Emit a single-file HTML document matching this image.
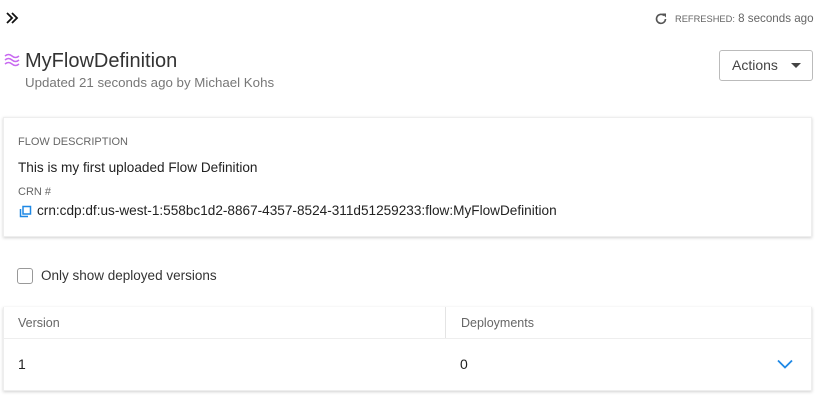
<!DOCTYPE html>
<html><head><style>
*{margin:0;padding:0;box-sizing:border-box}
body{width:823px;height:401px;background:#fff;font-family:"Liberation Sans",Arial,sans-serif;color:#2b2b2b;position:relative;overflow:hidden}
.a{position:absolute;white-space:nowrap}
.card{position:absolute;background:#fff;box-shadow:0 1px 3px rgba(0,0,0,.18);border:1px solid #eee}
</style></head><body>
<svg class="a" style="left:5px;top:11px" width="14" height="14" viewBox="0 0 14 14"><path d="M2 2l5 5-5 5M7 2l5 5-5 5" fill="none" stroke="#111" stroke-width="1.8"/></svg>
<svg class="a" style="left:654px;top:12px" width="14" height="14" viewBox="0 0 14 14"><path d="M11.5 7A4.5 4.5 0 1 1 10 3.5" fill="none" stroke="#555" stroke-width="1.6"/><path d="M8 1.5h4v4z" fill="#555"/></svg>
<div class="a" style="left:675px;top:12px;font-size:11.6px;color:#666"><span style="font-size:9.3px">REFRESHED:</span> 8 seconds ago</div>
<svg class="a" style="left:4px;top:53px" width="16" height="14" viewBox="0 0 16 14"><path d="M1 3q3.5-3 7 0t7 0M1 7q3.5-3 7 0t7 0M1 11q3.5-3 7 0t7 0" fill="none" stroke="#c86af0" stroke-width="1.5"/></svg>
<div class="a" style="left:25px;top:50px;font-size:20px;color:#333">MyFlowDefinition</div>
<div class="a" style="left:25px;top:75px;font-size:13.3px;color:#777">Updated 21 seconds ago by Michael Kohs</div>
<div class="a" style="left:719px;top:50px;width:94px;height:31px;border:1px solid #bbb;border-radius:3px;font-size:14px;color:#444;padding:6px 0 0 12px">Actions <span style="display:inline-block;width:0;height:0;border-left:5px solid transparent;border-right:5px solid transparent;border-top:5px solid #444;margin-left:9px;vertical-align:2px"></span></div>
<div class="card" style="left:3px;top:117px;width:809px;height:120px"></div>
<div class="a" style="left:18px;top:136px;font-size:11px;color:#666">FLOW DESCRIPTION</div>
<div class="a" style="left:18px;top:160px;font-size:13.6px;color:#222">This is my first uploaded Flow Definition</div>
<div class="a" style="left:18px;top:186px;font-size:11px;color:#666">CRN #</div>
<svg class="a" style="left:19px;top:205px" width="13" height="13" viewBox="0 0 13 13"><rect x="4" y="1.5" width="7.5" height="7.5" fill="none" stroke="#1e88e5" stroke-width="1.5"/><path d="M1.5 4v7.5H9" fill="none" stroke="#1e88e5" stroke-width="1.5"/></svg>
<div class="a" style="left:37px;top:203px;font-size:13.6px;color:#222">crn:cdp:df:us-west-1:558bc1d2-8867-4357-8524-311d51259233:flow:MyFlowDefinition</div>
<div class="a" style="left:17px;top:268px;width:16px;height:16px;border:1.5px solid #999;border-radius:3px"></div>
<div class="a" style="left:41px;top:268px;font-size:13.5px;color:#333">Only show deployed versions</div>
<div class="card" style="left:3px;top:307px;width:809px;height:84px;border-top:none"></div>
<div class="a" style="left:3px;top:338px;width:809px;height:1px;background:#eee"></div>
<div class="a" style="left:445px;top:307px;width:1px;height:31px;background:#e4e4e4"></div>
<div class="a" style="left:18px;top:316px;font-size:12.5px;color:#666">Version</div>
<div class="a" style="left:461px;top:316px;font-size:12.5px;color:#666">Deployments</div>
<div class="a" style="left:18px;top:356px;font-size:14px;color:#222">1</div>
<div class="a" style="left:460px;top:356px;font-size:14px;color:#222">0</div>
<svg class="a" style="left:777px;top:359px" width="16" height="10" viewBox="0 0 16 10"><path d="M1 1.5l7 7 7-7" fill="none" stroke="#1e88e5" stroke-width="1.8"/></svg>
</body></html>
